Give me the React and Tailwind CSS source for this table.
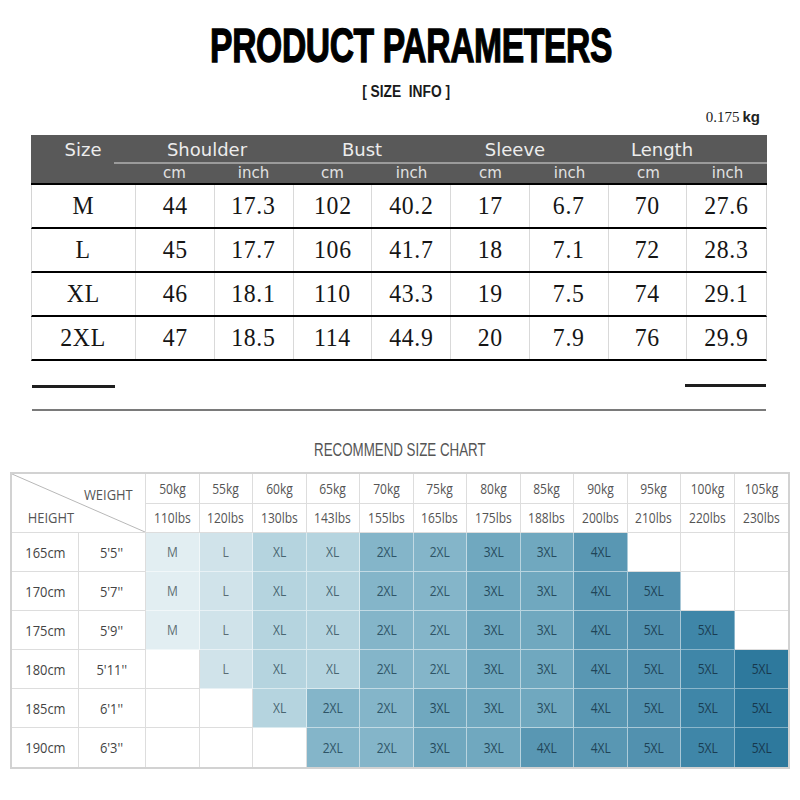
import React from "react";

const SIZE_ROWS = [
  ["M", "44", "17.3", "102", "40.2", "17", "6.7", "70", "27.6"],
  ["L", "45", "17.7", "106", "41.7", "18", "7.1", "72", "28.3"],
  ["XL", "46", "18.1", "110", "43.3", "19", "7.5", "74", "29.1"],
  ["2XL", "47", "18.5", "114", "44.9", "20", "7.9", "76", "29.9"],
];

const GROUPS = [
  { label: "Shoulder", w: "w-[144px]" },
  { label: "Bust", w: "w-[166px]" },
  { label: "Sleeve", w: "w-[140px]" },
  { label: "Length", w: "w-[154px]" },
];

const WEIGHTS = [
  ["50kg", "110lbs"],
  ["55kg", "120lbs"],
  ["60kg", "130lbs"],
  ["65kg", "143lbs"],
  ["70kg", "155lbs"],
  ["75kg", "165lbs"],
  ["80kg", "175lbs"],
  ["85kg", "188lbs"],
  ["90kg", "200lbs"],
  ["95kg", "210lbs"],
  ["100kg", "220lbs"],
  ["105kg", "230lbs"],
];

const CHART = [
  ["165cm", "5'5''", ["M", "L", "XL", "XL", "2XL", "2XL", "3XL", "3XL", "4XL", "", "", ""]],
  ["170cm", "5'7''", ["M", "L", "XL", "XL", "2XL", "2XL", "3XL", "3XL", "4XL", "5XL", "", ""]],
  ["175cm", "5'9''", ["M", "L", "XL", "XL", "2XL", "2XL", "3XL", "3XL", "4XL", "5XL", "5XL", ""]],
  ["180cm", "5'11''", ["", "L", "XL", "XL", "2XL", "2XL", "3XL", "3XL", "4XL", "5XL", "5XL", "5XL"]],
  ["185cm", "6'1''", ["", "", "XL", "2XL", "2XL", "3XL", "3XL", "3XL", "4XL", "5XL", "5XL", "5XL"]],
  ["190cm", "6'3''", ["", "", "", "2XL", "2XL", "3XL", "3XL", "4XL", "4XL", "5XL", "5XL", "5XL"]],
];

// fill colour per size, the last two 5XL columns get darker
const SHADE = {
  M: "bg-[#e2eef2] text-[#5d6e74]",
  L: "bg-[#d0e3ea] text-[#5a6c73]",
  XL: "bg-[#b5d4df] text-[#486570]",
  "2XL": "bg-[#84b5c9] text-[#2e5466]",
  "3XL": "bg-[#70a8bf] text-[#264a5b]",
  "4XL": "bg-[#5997b3] text-[#1f4457]",
  "5XL": "bg-[#5291af] text-[#1d4256]",
  "5XL-a": "bg-[#3f86a8] text-[#1a3d52]",
  "5XL-b": "bg-[#2e799d] text-[#17384d]",
};

function shadeFor(size, col) {
  if (!size) return "bg-white border-[#dddddd]";
  if (size === "5XL" && col === 10) return SHADE["5XL-a"] + " border-white/40";
  if (size === "5XL" && col === 11) return SHADE["5XL-b"] + " border-white/40";
  return SHADE[size] + " border-white/50";
}

const narrow = "inline-block scale-x-[0.86] whitespace-nowrap";

function SizeTable() {
  return (
    <div className="ml-[31px] w-[736px] font-['Liberation_Serif',serif]">
      <div className="bg-[#595959] h-[48px] flex flex-col font-['DejaVu_Sans',sans-serif] text-[#ececec]">
        <div className="h-[27px] flex items-center pt-[2px] text-[18px] leading-none">
          <div className="w-[104px] text-center">Size</div>
          {GROUPS.map((g) => (
            <div key={g.label} className={`${g.w} text-center`}>
              {g.label}
            </div>
          ))}
        </div>
        <div className="ml-[83px] h-[2px] bg-[#9b9b9b]" />
        <div className="h-[19px] grid grid-cols-[104px_repeat(8,1fr)] items-center text-[15px] leading-none text-[#e2e2e2]">
          <div />
          {Array.from({ length: 4 }).map((_, i) => (
            <React.Fragment key={i}>
              <div className="text-center">cm</div>
              <div className="text-center">inch</div>
            </React.Fragment>
          ))}
        </div>
      </div>
      <div className="border-t-2 border-black">
        {SIZE_ROWS.map((row) => (
          <div
            key={row[0]}
            className="grid grid-cols-[104px_repeat(8,1fr)] h-[44px] border-b-2 border-black border-l border-l-[#d4d4d4] border-r border-r-[#d4d4d4]"
          >
            {row.map((v, i) => (
              <div
                key={i}
                className={`flex items-center justify-center text-[25px] tracking-[0.03em] text-[#151515] ${
                  i < 8 ? "border-r border-[#d9d9d9]" : ""
                }`}
              >
                <span className="inline-block scale-x-[0.95]">{v}</span>
              </div>
            ))}
          </div>
        ))}
      </div>
    </div>
  );
}

function ChartTable() {
  return (
    <div className="ml-[10px] w-[780px] border-2 border-[#d2d2d2] font-['Open_Sans',sans-serif] text-[14px] leading-none">
      <div className="grid grid-cols-[67px_67px_repeat(12,1fr)] grid-rows-[30px_29px_repeat(6,39px)]">
        <div className="col-span-2 row-span-2 relative border-r border-b border-[#dddddd] text-[#555]">
          <svg className="absolute inset-0 w-full h-full" preserveAspectRatio="none" viewBox="0 0 100 100">
            <line x1="0" y1="0" x2="100" y2="100" stroke="#b8b8b8" strokeWidth="1" vectorEffect="non-scaling-stroke" />
          </svg>
          <div className="absolute right-[8px] top-[13px] text-[15px]">
            <span className={narrow}>WEIGHT</span>
          </div>
          <div className="absolute left-[12px] top-[36px] text-[15px]">
            <span className={narrow}>HEIGHT</span>
          </div>
        </div>
        {WEIGHTS.map(([kg], i) => (
          <div
            key={kg}
            className={`flex items-center justify-center border-b border-[#dddddd] text-[#555] ${
              i < 11 ? "border-r" : ""
            }`}
          >
            <span className={narrow}>{kg}</span>
          </div>
        ))}
        {WEIGHTS.map(([kg, lbs], i) => (
          <div
            key={lbs}
            className={`flex items-center justify-center border-b border-[#dddddd] text-[#555] ${
              i < 11 ? "border-r" : ""
            }`}
          >
            <span className={narrow}>{lbs}</span>
          </div>
        ))}
        {CHART.map(([cm, ft, sizes], r) => (
          <React.Fragment key={cm}>
            <div className={`flex items-center justify-center border-r border-[#dddddd] text-[15px] text-[#444] ${r < 5 ? "border-b" : ""}`}>
              <span className={narrow}>{cm}</span>
            </div>
            <div className={`flex items-center justify-center border-r border-[#dddddd] text-[15px] text-[#444] ${r < 5 ? "border-b" : ""}`}>
              <span className={narrow}>{ft}</span>
            </div>
            {sizes.map((s, c) => (
              <div
                key={c}
                className={`flex items-center justify-center ${shadeFor(s, c)} ${c < 11 ? "border-r" : ""} ${
                  r < 5 ? "border-b" : ""
                }`}
              >
                <span className={narrow}>{s}</span>
              </div>
            ))}
          </React.Fragment>
        ))}
      </div>
    </div>
  );
}

export default function App() {
  return (
    <div className="w-[800px] h-[800px] bg-white overflow-hidden flex flex-col">
      <div className="h-[22px]" />
      <div className="h-[48px] pl-[23px] text-center">
        <span className="inline-block font-['Liberation_Sans',sans-serif] font-bold text-[48px] leading-[48px] tracking-[-0.5px] scale-x-[0.7] text-black [-webkit-text-stroke:1.3px_black]">
          PRODUCT PARAMETERS
        </span>
      </div>
      <div className="h-[9px]" />
      <div className="h-[16px] pl-[13px] text-center">
        <span className="inline-block font-['Liberation_Sans',sans-serif] font-bold text-[16px] leading-[16px] text-[#1a1a1a] scale-x-[0.86]">
          [ SIZE&nbsp;&nbsp;INFO ]
        </span>
      </div>
      <div className="h-[40px] flex justify-end items-end pb-[10px] pr-[40px] text-[15px] leading-[16px] text-[#222]">
        <span className="font-['Liberation_Serif',serif]">0.175</span>
        <span className="ml-[3px] font-['Liberation_Sans',sans-serif] font-bold text-[15px]">kg</span>
      </div>

      <SizeTable />

      <div className="mt-[24px] h-[3px] flex justify-between ml-[32px] w-[734px]">
        <div className="w-[83px] h-[3px] bg-[#1e1e1e]" />
        <div className="w-[81px] h-[3px] bg-[#1e1e1e] -translate-y-[1px]" />
      </div>
      <div className="mt-[21px] ml-[32px] w-[734px] h-[2px] bg-[#7a7a7a]" />

      <div className="mt-[27px] h-[18px] text-center">
        <span className="inline-block font-['Liberation_Sans',sans-serif] text-[18px] leading-[18px] text-[#555] scale-x-[0.74]">
          RECOMMEND SIZE CHART
        </span>
      </div>
      <div className="h-[16px]" />
      <ChartTable />
    </div>
  );
}
